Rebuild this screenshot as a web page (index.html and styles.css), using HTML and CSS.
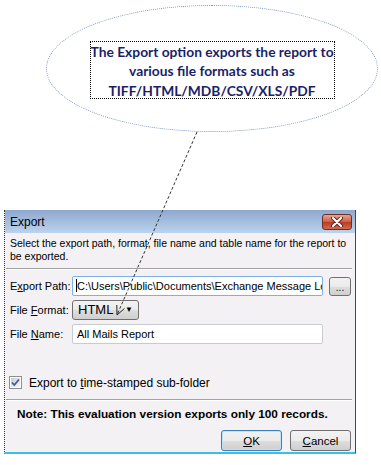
FILE: index.html
```html
<!DOCTYPE html>
<html lang="en">
<head>
  <meta charset="UTF-8">
  <title>Export</title>
  <link rel="stylesheet" href="styles.css">
</head>
<body>

  <!-- callout bubble -->
  <div class="callout">
    <p class="callout-text">The Export option exports the report to<br>various file formats such as<br>TIFF/HTML/MDB/CSV/XLS/PDF</p>
  </div>

  <!-- export dialog -->
  <div class="dialog">
    <div class="titlebar">
      <span>Export</span>
      <span class="close-btn">
        <svg width="14" height="10" viewBox="0 0 14 10">
          <path d="M3 1 L11 9 M11 1 L3 9" stroke="#5a2418" stroke-width="4" stroke-linecap="round"/>
          <path d="M3 1 L11 9 M11 1 L3 9" stroke="#fff" stroke-width="2.2" stroke-linecap="round"/>
        </svg>
      </span>
    </div>

    <p class="desc">Select the export path, format, file name and table name for the report to be exported.</p>
    <div class="sep"></div>

    <div class="form">
      <span class="label">E<u>x</u>port Path:</span>
      <div class="path-row">
        <div class="field focused"><span class="caret"></span>C:\Users\Public\Documents\Exchange Message Logs</div>
        <span class="btn browse">...</span>
      </div>

      <span class="label">File <u>F</u>ormat:</span>
      <div>
        <div class="select"><span>HTML</span><span class="arrow">&#9660;</span></div>
      </div>

      <span class="label">File <u>N</u>ame:</span>
      <div class="field">All Mails Report</div>
    </div>

    <div class="check-row">
      <svg class="checkbox" width="13" height="13" viewBox="0 0 13 13">
        <defs>
          <linearGradient id="cb" x1="0" y1="0" x2="1" y2="1">
            <stop offset="0" stop-color="#c9ccd6"/>
            <stop offset="1" stop-color="#f6f6f8"/>
          </linearGradient>
        </defs>
        <rect x="0.5" y="0.5" width="12" height="12" fill="#fff" stroke="#8e8f91"/>
        <rect x="2" y="2" width="9" height="9" fill="url(#cb)"/>
        <path d="M3 6.5 L5.3 9 L10 3.5" fill="none" stroke="#44579a" stroke-width="1.8"/>
      </svg>
      <span>Export to <u>t</u>ime-stamped sub-folder</span>
    </div>
    <div class="sep"></div>

    <p class="note">Note: This evaluation version exports only 100 records.</p>

    <div class="actions">
      <button class="btn default"><u>O</u>K</button>
      <button class="btn"><u>C</u>ancel</button>
    </div>
  </div>

  <!-- pointer from bubble to the format box -->
  <svg class="pointer" width="381" height="465" viewBox="0 0 381 465">
    <line x1="197" y1="132" x2="117" y2="315" stroke="#333" stroke-dasharray="3 2"/>
    <path d="M124.5 308.4 L117 315 L116.8 305" fill="none" stroke="#222"/>
  </svg>

</body>
</html>
```

FILE: styles.css
```css
body {
  margin: 0;
  position: relative;
  width: 381px;
  height: 465px;
  background: #fff;
  font-family: "Liberation Sans", Arial, sans-serif;
  font-size: 11px;
  color: #000;
}

/* Callout bubble */
.callout {
  box-sizing: border-box;
  margin: 5px 0 0 46px;
  width: 332px;
  height: 127px;
  border: 1px dotted #7c95c4;
  border-radius: 50%;
  display: flex;
  justify-content: center;
  align-items: center;
}

.callout-text {
  box-sizing: border-box;
  margin: 2px 0 0 0;
  width: 245px;
  height: 58px;
  border: 1px dotted #000;
  font-family: Lato, "Liberation Sans", sans-serif;
  font-weight: bold;
  font-size: 13.8px;
  line-height: 19.5px;
  text-align: center;
  color: #1b1f6a;
  white-space: nowrap;
}

/* Dialog window */
.dialog {
  box-sizing: border-box;
  margin: 78px 0 0 4px;
  width: 352px;
  background: #f3f1f4;
  border-left: 1px dotted #333;
  border-right: 1px solid #274a80;
  border-bottom: 2px solid #3cbfe6;
  padding-bottom: 1px;
}

.titlebar {
  height: 23px;
  display: flex;
  align-items: center;
  justify-content: space-between;
  padding: 0 3px 0 5px;
  background: linear-gradient(#8ea8ce, #bcd3ee);
  font-size: 12px;
}

.close-btn {
  box-sizing: border-box;
  width: 30px;
  height: 16px;
  border: 1px solid #6e2d22;
  border-radius: 3px;
  background: linear-gradient(#e6a595, #cf5a40 50%, #b93a22 51%, #d36a4e);
  display: flex;
  align-items: center;
  justify-content: center;
}

.desc {
  margin: 0;
  padding: 4px 4px 0 5px;
  font-size: 10.5px;
  line-height: 13px;
  height: 26px;
}

.sep {
  margin: 5px 3px 0 1px;
  border-top: 1px solid #a0a0a0;
  border-bottom: 1px solid #fff;
}

/* Form rows */
.form {
  display: grid;
  grid-template-columns: 62px 1fr;
  grid-auto-rows: 20px;
  row-gap: 4px;
  padding: 6px 4px 0 5px;
  align-items: center;
}

.path-row {
  display: flex;
  gap: 6px;
  align-items: center;
}

.field {
  box-sizing: border-box;
  width: 251px;
  height: 20px;
  padding: 0 4px;
  line-height: 18px;
  border: 1px solid #c6cbd2;
  border-radius: 2px;
  background: #fff;
  white-space: nowrap;
  overflow: hidden;
}

.field.focused {
  border-color: #7eb0e4;
  padding-left: 3px;
}

.caret {
  display: inline-block;
  width: 1px;
  height: 13px;
  background: #000;
  vertical-align: -2px;
}

.select {
  box-sizing: border-box;
  width: 67px;
  height: 20px;
  padding: 0 5px 0 5px;
  line-height: 18px;
  border: 1px solid #707070;
  border-radius: 3px;
  background: linear-gradient(#f2f2f2, #ebebeb 50%, #dddddd 51%, #cfcfcf);
  font-size: 13px;
  display: flex;
  justify-content: space-between;
}

.arrow {
  font-size: 8px;
}

.btn {
  box-sizing: border-box;
  height: 21px;
  width: 61px;
  border: 1px solid #707070;
  border-radius: 3px;
  background: linear-gradient(#f2f2f2, #ebebeb 50%, #dddddd 51%, #cfcfcf);
  font-family: inherit;
  font-size: 11.5px;
  padding: 0;
  color: #000;
}

.btn.browse {
  display: flex;
  align-items: flex-end;
  justify-content: center;
  width: 22px;
  height: 19px;
  font-size: 10px;
  line-height: 14px;
}

.btn.default {
  border-color: #3c7fb1;
  box-shadow: inset 0 0 0 1px #bfe4f7;
}

.check-row {
  display: flex;
  align-items: center;
  gap: 7px;
  margin: 32px 0 0 4px;
  height: 13px;
  font-size: 12px;
}

.check-row + .sep {
  margin-top: 10px;
}

.note {
  margin: 7px 0 0 12px;
  font-weight: bold;
  font-size: 11.8px;
  line-height: 13px;
}

.actions {
  display: flex;
  justify-content: flex-end;
  gap: 8px;
  padding: 9px 4px 0 0;
}

/* overlay arrow */
.pointer {
  position: absolute;
  top: 0;
  left: 0;
  pointer-events: none;
}
```
